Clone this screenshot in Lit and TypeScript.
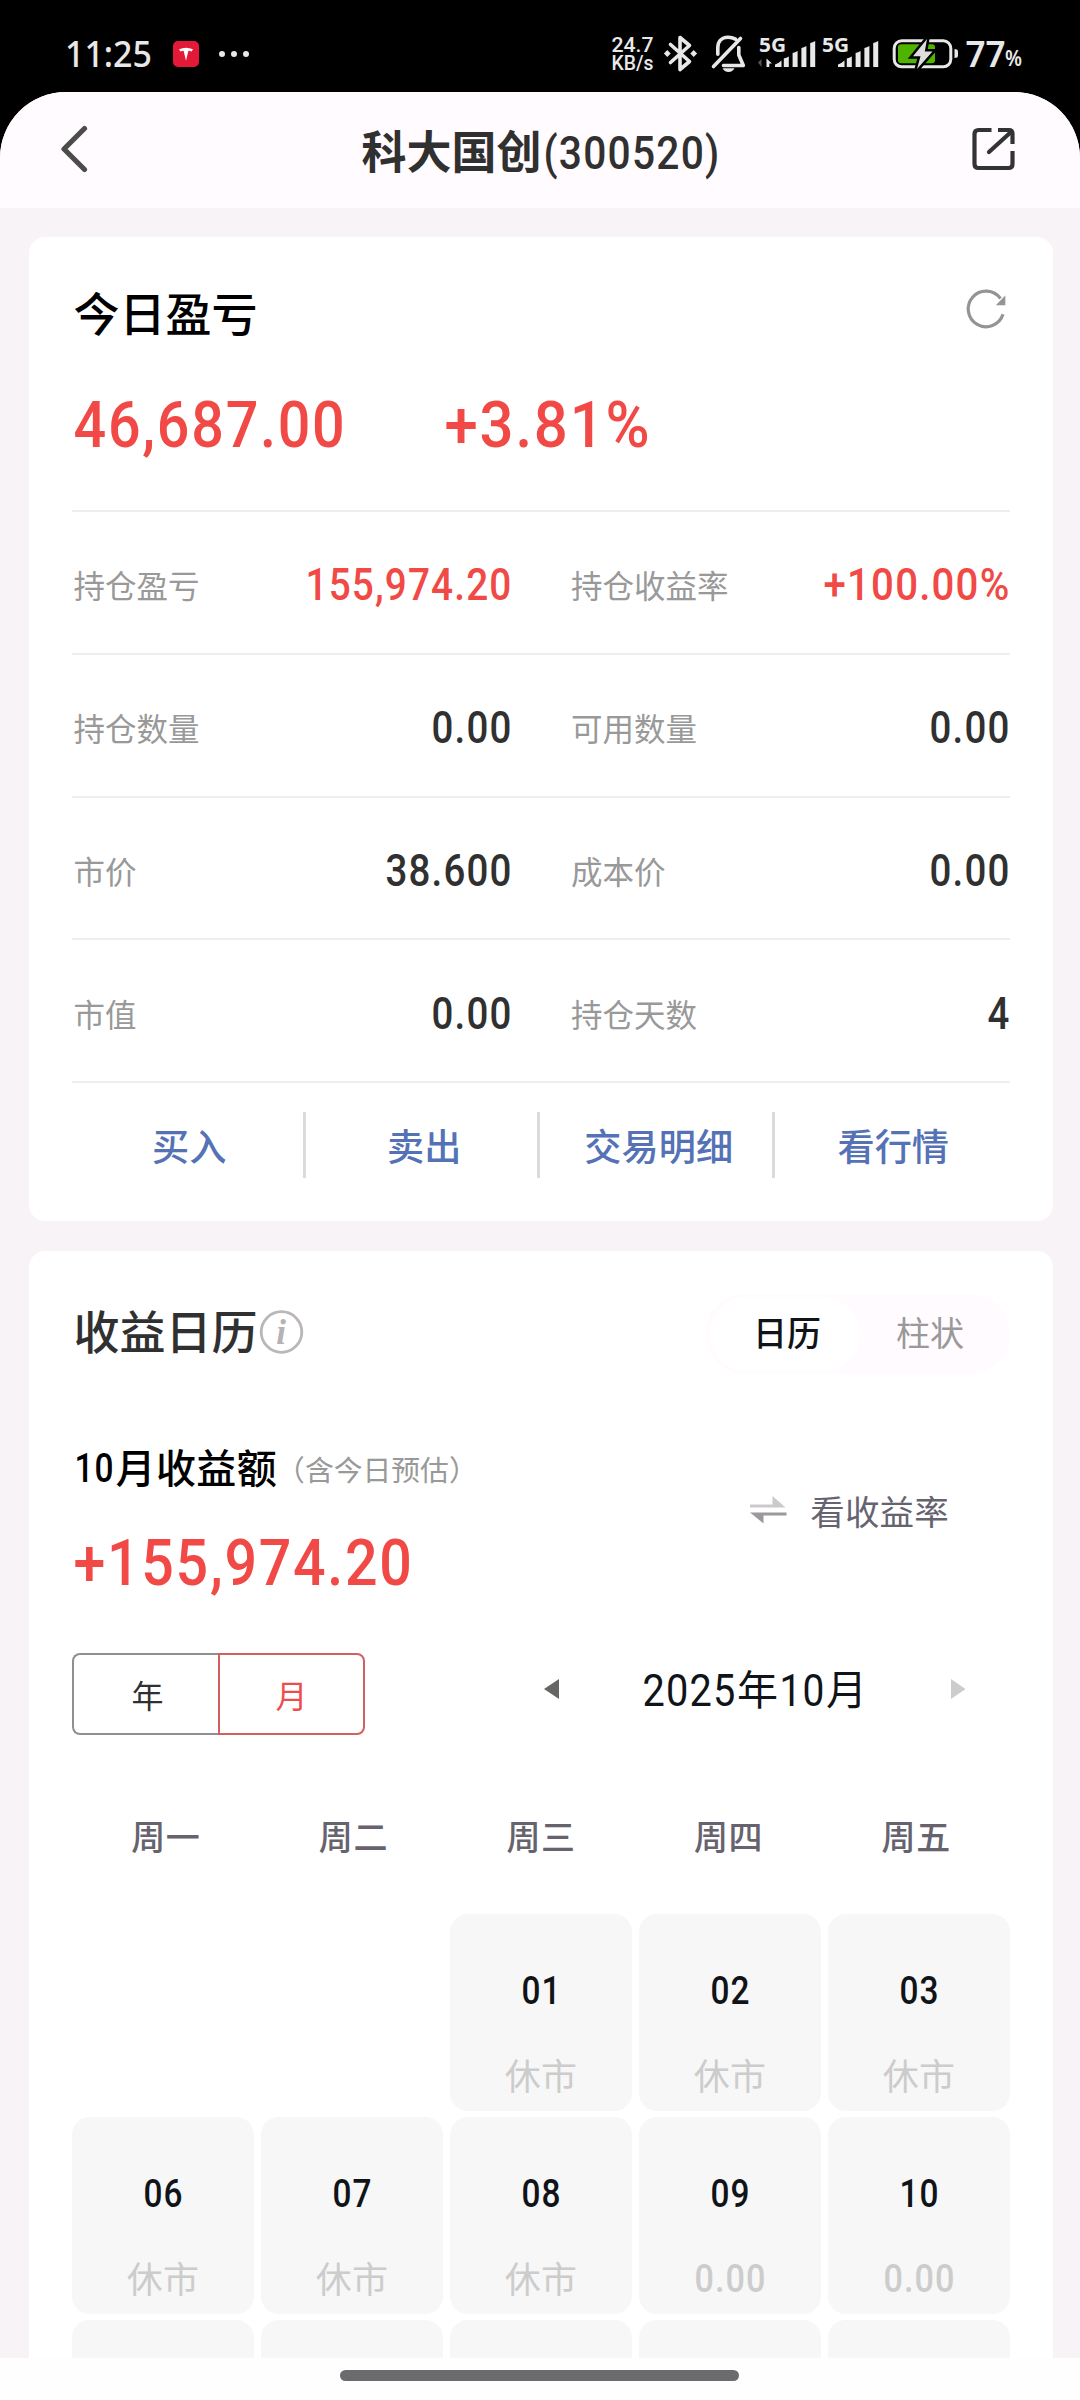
import { LitElement, html, svg, css, nothing } from "lit";
import { customElement, property } from "lit/decorators.js";

/** Numeric text set to an exact advance width; its box is one cap height tall. */
@customElement("num-text")
class NumText extends LitElement {
  @property() text = "";
  @property({ type: Number }) w = 0;
  @property({ type: Number }) size = 40;
  @property() weight = "500";
  static styles = css`
    :host { display: flex; flex: none; }
    svg { display: block; overflow: visible; fill: currentColor; font-family: Roboto, "Liberation Sans", sans-serif; }
    text { letter-spacing: .03em; }
  `;
  render() {
    const h = this.size * 0.711;
    return html`<svg width=${this.w} height=${h}>
      <text x="0.5" y=${h} font-size=${this.size} font-weight=${this.weight}
        textLength=${this.w} lengthAdjust="spacingAndGlyphs">${this.text}</text>
    </svg>`;
  }
}

const num = (text: string, w: number, size: number, weight = "500") =>
  html`<num-text .text=${text} .w=${w} .size=${size} .weight=${weight}></num-text>`;

@customElement("status-bar")
class StatusBar extends LitElement {
  static styles = css`
    :host { display: flex; height: 92px; background: #000; }
    svg { display: block; font-family: "Noto Sans", Roboto, sans-serif; fill: #e8e8e8; }
    .line { fill: none; stroke: #e8e8e8; stroke-width: 3.6; stroke-linecap: round; stroke-linejoin: round; }
    .rate { font-family: Roboto, sans-serif; font-size: 19.5px; font-weight: 500; }
  `;
  bars(x: number) {
    const tops = [61, 56.5, 51, 46, 41];
    return tops.map((t, i) => i === 0
      ? svg`<path d="M${x} 67v-2.5q4-1.5 6.5-4v6.5z"/>`
      : svg`<path d=${`M${x + i * 8.8} 67V${t + 2}q2.5-.5 5-2V67z`}/>`);
  }
  render() {
    return html`<svg width="1080" height="92" viewBox="0 0 1080 92">
      <text x="65" y="67" font-size="36" font-weight="500" textLength="87" lengthAdjust="spacingAndGlyphs">11:25</text>
      <rect x="173" y="41" width="26" height="26" rx="5" fill="#e31937"/>
      <path fill="#fff" d="M179 49.2q7-3 14 0l-1.4 2.300q-1.600-.8-3.200-.8l-2.400 10-2.400-10q-1.600 0-3.200.8z"/>
      <circle cx="222" cy="54" r="3"/><circle cx="234" cy="54" r="3"/><circle cx="246" cy="54" r="3"/>
      <text class="rate" x="611.500" y="52.300" textLength="42" lengthAdjust="spacingAndGlyphs">24.7</text>
      <text class="rate" x="611.500" y="70" textLength="42" lengthAdjust="spacingAndGlyphs">KB/s</text>
      <path class="line" d="M670.500 44.500L689.500 61.500 680 69.500V37.500L689.500 45.500 670.500 62.500"/>
      <path d="M667.300 50l3.400 3.500-3.400 3.500-3.400-3.500zM693.700 50l3.400 3.500-3.400 3.500-3.400-3.500z"/>
      <path class="line" d="M713.500 66.500L740.500 38.500M735.500 39.200Q732 37.300 728 37.300c-7 0-10.200 5-10.200 10.500v6.500M738.800 47.500v7.500l4.500 10.500H723.500"/>
      <path d="M722.500 68.300h12q-1.800 3.600-6 3.600t-6-3.600z"/>
      <text x="759" y="52.300" font-size="20" font-weight="700" textLength="27" lengthAdjust="spacingAndGlyphs">5G</text>
      <path fill="#555" d="M761.500 59v8L758 62.500z"/><path d="M766.500 67v-8.500l5.500 5h-2.700V67z"/>
      ${this.bars(775)}
      <text x="822" y="52.300" font-size="20" font-weight="700" textLength="27" lengthAdjust="spacingAndGlyphs">5G</text>
      ${this.bars(838)}
      <rect x="894.200" y="40.800" width="56.600" height="26" rx="7.500" fill="none" stroke="#e8e8e8" stroke-width="3"/>
      <path d="M954.500 49q3.500 0 3.500 2.500v4q0 2.500-3.500 2.500z"/>
      <rect x="898" y="44.300" width="37" height="19" rx="3" fill="#4fb400"/>
      <path d="M927 39L913 56.300H920.500L917 69 932.500 51.500H924.800z" fill="#ddd" stroke="#000" stroke-width="5" paint-order="stroke"/>
      <text x="965.500" y="67" font-size="35.500" font-weight="600" textLength="40" lengthAdjust="spacingAndGlyphs">77</text>
      <text x="1005" y="66" font-size="21" font-weight="600" textLength="17" lengthAdjust="spacingAndGlyphs">%</text>
    </svg>`;
  }
}

interface Metric { label: string; value: string; w: number; up?: boolean; }
interface Day { d: string; v: string; }

const METRICS: Metric[] = [
  { label: "持仓盈亏", value: "155,974.20", w: 207, up: true },
  { label: "持仓收益率", value: "+100.00%", w: 187, up: true },
  { label: "持仓数量", value: "0.00", w: 81 },
  { label: "可用数量", value: "0.00", w: 81 },
  { label: "市价", value: "38.600", w: 127 },
  { label: "成本价", value: "0.00", w: 81 },
  { label: "市值", value: "0.00", w: 81 },
  { label: "持仓天数", value: "4", w: 23 },
];
const ACTIONS = ["买入", "卖出", "交易明细", "看行情"];
const WEEK = ["周一", "周二", "周三", "周四", "周五"];
const DAYS: (Day | null)[] = [
  null, null, { d: "01", v: "休市" }, { d: "02", v: "休市" }, { d: "03", v: "休市" },
  { d: "06", v: "休市" }, { d: "07", v: "休市" }, { d: "08", v: "休市" }, { d: "09", v: "0.00" }, { d: "10", v: "0.00" },
];

@customElement("app-root")
class AppRoot extends LitElement {
  static styles = css`
    :host {
      display: flex; flex-direction: column; width: 1080px; height: 2400px; overflow: hidden;
      background: #000; font-family: "Noto Sans CJK SC", sans-serif; color: #303030;
    }
    * { box-sizing: border-box; }
    svg { display: block; flex: none; }
    .app { flex: none; height: 2266px; background: #f7f3f7; border-radius: 66px 66px 0 0; overflow: hidden; }
    .header { display: flex; align-items: center; justify-content: space-between; height: 116px; padding: 0 63px 0 60px; background: #fffbff; }
    .title { display: flex; align-items: center; gap: 1px; font-size: 45px; line-height: 60px; font-weight: 700; margin-left: 22px; }
    .title span { margin-top: -1px; }
    .title num-text { margin-top: 5px; }
    .card { margin: 29px 27px 0 29px; padding: 0 43px; background: #fff; border-radius: 16px; }
    .card + .card { margin-top: 30px; }
    .red { color: #f04946; }
    .today { display: flex; align-items: center; justify-content: space-between; height: 150px; padding-bottom: 2px; }
    .today h2 { color: #000; }
    .today svg { margin: -5px 0 0 0; }
    h2 { margin: 0 0 0 1.500px; font-size: 46px; line-height: 60px; font-weight: 500; }
    .sums { display: flex; gap: 98px; height: 123px; padding: 14px 0 0 1px; }
    .metrics { display: grid; grid-template-columns: 1fr 1fr; grid-auto-rows: 142.750px; }
    .metric { display: flex; align-items: center; justify-content: space-between; border-top: 2px solid #eee; padding: 5px 0 0 1.500px; }
    .metric:nth-child(odd) { padding-right: 29px; }
    .metric:nth-child(even) { padding-left: 30px; }
    .metric .label { font-size: 31.500px; line-height: 40px; color: #999; font-weight: 400; margin-top: -1px; }
    .actions { display: grid; grid-template-columns: repeat(4, 1fr); height: 140px; padding-top: 29px; border-top: 2px solid #eee; }
    .action { display: flex; align-items: center; justify-content: center; height: 66px; font-size: 37.200px; line-height: 50px; color: #5472b5; font-weight: 500; }
    .action + .action { border-left: 3px solid #ddd9dd; margin-left: -4px; padding-left: 2px; }
    .cal-head { display: flex; align-items: center; justify-content: space-between; padding-top: 42.500px; }
    .cal-title { display: flex; align-items: center; }
    .cal-title h2 { margin-top: -10px; }
    .cal-title svg { margin: -4px 0 0 0; }
    .seg { display: flex; align-items: center; width: 305px; height: 80px; padding: 3px 5px; border-radius: 40px; background: #fffbff; font-size: 34px; line-height: 44px; }
    .seg div { display: flex; align-items: center; justify-content: center; height: 74px; width: 140px; color: #999; padding-bottom: 3px; }
    .seg .on { background: #fff; border-radius: 37px; color: #101418; font-weight: 500; padding-left: 4px; width: 150px; }
    .sum { display: flex; justify-content: space-between; margin-top: 73.500px; }
    .sum-label { display: flex; align-items: center; height: 40px; padding-left: 1.500px; color: #000; font-size: 40px; font-weight: 500; line-height: 40px; letter-spacing: .4px; }
    .sum-label span { margin: -2px 0 0 2px; }
    .sum-label small { font-size: 28.800px; font-weight: 400; color: #999; letter-spacing: 0; margin: 4px 0 0 -1px; }
    .sum-total { padding: 52px 0 0 1px; display: flex; }
    .swap { display: flex; align-items: center; gap: 23px; height: 34px; margin: 46px 61px 0 0; font-size: 34.500px; line-height: 34px; color: #666370; letter-spacing: .2px; }
    .controls { display: flex; margin-top: 68px; height: 82px; }
    .toggle { display: flex; font-size: 32px; line-height: 40px; }
    .toggle div { display: flex; align-items: center; justify-content: center; width: 146px; border: 2px solid #8f8f8f; border-right: 0; border-radius: 8px 0 0 8px; padding-left: 3px; }
    .toggle .on { width: 147px; border: 2px solid #d2605e; border-radius: 0 8px 8px 0; color: #ee4d4d; padding: 0; }
    .nav { display: flex; align-items: center; margin-left: 179px; padding-bottom: 9px; color: #101418; }
    .month { display: flex; align-items: center; font-size: 41px; line-height: 50px; margin: 0 83px 0 82.500px; }
    .month span { margin: -4px 0 0 1px; width: 42px; text-align: center; }
    .week { display: grid; grid-template-columns: repeat(5, 1fr); margin-top: 81px; height: 40px; text-align: center; font-size: 34px; line-height: 40px; letter-spacing: .6px; color: #66636e; font-weight: 500; }
    .days { display: grid; grid-template-columns: repeat(5, 1fr); grid-auto-rows: 197px; gap: 6px 7px; margin-top: 58px; }
    .day { display: flex; flex-direction: column; align-items: center; background: #f7f7f7; border-radius: 18px; padding-top: 63px; color: #101418; }
    .day .v { display: flex; align-items: center; height: 40px; margin-top: 50px; font-size: 36px; line-height: 40px; color: #ccc; font-weight: 400; letter-spacing: .3px; }
    .day .v num-text { margin-top: 3px; }
    .gesture { display: flex; justify-content: center; flex: none; height: 42px; padding-top: 12px; background: #fffeff; }
    .gesture div { width: 399px; height: 10.500px; border-radius: 6px; background: #6b6a6d; margin-right: 1px; }
  `;

  render() {
    return html`
      <status-bar></status-bar>
      <div class="app">
        <div class="header">
          <svg width="28" height="50" viewBox="0 0 28 50"><path d="M24.500 3.500L4 24 24.500 44.500" fill="none" stroke="#4a4d4a" stroke-width="5.200" stroke-linecap="round" stroke-linejoin="round"/></svg>
          <div class="title"><span>科大国创</span>${num("(300520)", 177, 47)}</div>
          <svg width="46" height="46" viewBox="0 0 46 46" fill="none" stroke="#333" stroke-width="4.200" stroke-linejoin="round">
            <path d="M20.500 3H7.500Q3.500 3 3.500 7V37Q3.500 41 7.500 41H37.500Q41.500 41 41.500 37V24"/>
            <path d="M27 3H38Q41.500 3 41.500 6.500V17"/><path d="M40 5L18 25" stroke-linecap="round"/>
          </svg>
        </div>

        <section class="card">
          <div class="today">
            <h2>今日盈亏</h2>
            <svg width="48" height="48" viewBox="0 0 48 48">
              <path d="M41 29.300A17.800 17.800 0 1 1 38.500 13.500" fill="none" stroke="#949496" stroke-width="3.200"/>
              <path d="M43.300 10.500V20.200H33.800z" fill="#949496"/>
            </svg>
          </div>
          <div class="sums red">${num("46,687.00", 273, 64.5)}${num("+3.81%", 207, 64.5)}</div>
          <div class="metrics">
            ${METRICS.map((m) => html`<div class="metric"><span class="label">${m.label}</span><div class=${m.up ? "red" : ""}>${num(m.value, m.w, 43.8)}</div></div>`)}
          </div>
          <div class="actions">${ACTIONS.map((a) => html`<div class="action">${a}</div>`)}</div>
        </section>

        <section class="card">
          <div class="cal-head">
            <div class="cal-title">
              <h2>收益日历</h2>
              <svg width="48" height="48" viewBox="0 0 48 48">
                <circle cx="23.500" cy="24" r="20.300" fill="none" stroke="#bab6ba" stroke-width="2.800"/>
                <text x="23" y="36" text-anchor="middle" font-family="Liberation Serif, serif" font-style="italic" font-weight="700" font-size="35" fill="#b5b1b5">i</text>
              </svg>
            </div>
            <div class="seg"><div class="on">日历</div><div>柱状</div></div>
          </div>
          <div class="sum">
            <div>
              <div class="sum-label">${num("10", 40, 40.8)}<span>月收益额</span><small>（含今日预估）</small></div>
              <div class="sum-total red">${num("+155,974.20", 340, 64.5)}</div>
            </div>
            <div class="swap">
              <svg width="38" height="30" viewBox="0 0 38 30">
                <path d="M1 9.500H23.500V1L36.500 12.500H1z" fill="#cdcacd"/>
                <path d="M37.500 17.500H1L14.500 28.500V20.500H37.500z" fill="#9c999c"/>
              </svg>
              <span>看收益率</span>
            </div>
          </div>
          <div class="controls">
            <div class="toggle"><div>年</div><div class="on">月</div></div>
            <div class="nav">
              <svg width="15" height="20" viewBox="0 0 15 20"><path d="M15 0V20L0 10z" fill="#666763"/></svg>
              <div class="month">${num("2025", 94, 44.3, "400")}<span>年</span>${num("10", 46, 44.3, "400")}<span>月</span></div>
              <svg width="15" height="20" viewBox="0 0 15 20"><path d="M0 0V20L14.500 10z" fill="#ccc"/></svg>
            </div>
          </div>
          <div class="week">${WEEK.map((w) => html`<span>${w}</span>`)}</div>
          <div class="days">
            ${DAYS.map((d) => d
              ? html`<div class="day">${num(d.d, 40, 38.3)}<div class="v">${d.v === "0.00" ? num(d.v, 72, 38.3) : d.v}</div></div>`
              : html`<div></div>`)}
            ${WEEK.map(() => html`<div class="day">${nothing}</div>`)}
          </div>
        </section>
      </div>
      <div class="gesture"><div></div></div>
    `;
  }
}
